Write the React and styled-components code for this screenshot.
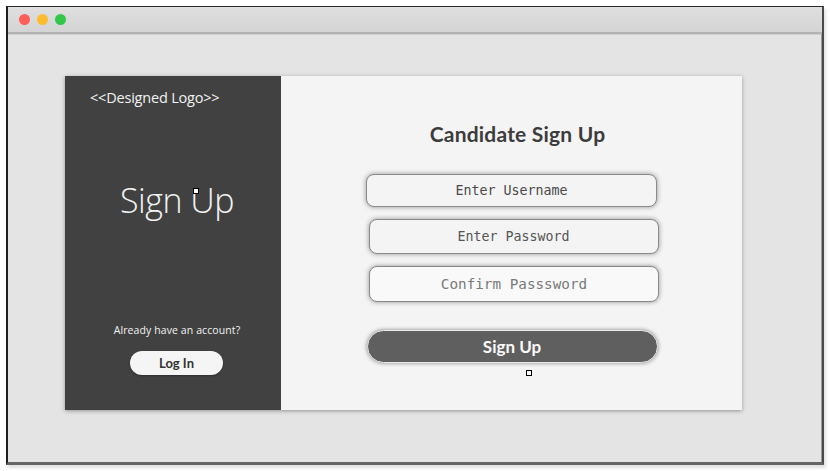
import React from "react";
import styled, { createGlobalStyle } from "styled-components";

const Global = createGlobalStyle`
  html, body { margin: 0; padding: 0; background: #ffffff; }
  body { width: 830px; height: 471px; overflow: hidden; font-family: "Open Sans", sans-serif; }
`;

const Page = styled.div`
  padding: 6px 6px 0 6px;
`;

const Window = styled.div`
  width: 818px;
  height: 459px;
  box-sizing: border-box;
  border-top: 1px solid #2a2a2a;
  border-left: 2px solid #1e1e1e;
  border-right: 2px solid #4a4a4a;
  border-bottom: 3px solid #666;
  box-shadow: 2px 3px 3px rgba(0,0,0,0.12);
  display: flex;
  flex-direction: column;
  background: #e4e4e4;
`;

const TitleBar = styled.div`
  height: 25px;
  background: linear-gradient(#e0dfe0, #d5d4d5);
  border-bottom: 2px solid #b2b2b2;
  box-shadow: 0 1px 0 #d0d0d0;
  display: flex;
  align-items: center;
  gap: 7px;
  padding-left: 11px;
  flex-shrink: 0;
`;

const Light = styled.span`
  width: 11px;
  height: 11px;
  border-radius: 50%;
  background: ${p => p.$c};
`;

const Body = styled.div`
  flex: 1;
  padding: 42px 0 0 57px;
  border-right: 1px solid #999;
`;

const Card = styled.div`
  width: 677px;
  height: 334px;
  display: flex;
  box-shadow: 0 1px 4px rgba(0,0,0,0.35);
`;

const LeftPanel = styled.div`
  position: relative;
  width: 216px;
  background: #414141;
  display: flex;
  flex-direction: column;
  align-items: center;
  color: #f2f2f2;
`;

const Logo = styled.div`
  align-self: flex-start;
  margin: 12px 0 0 25px;
  font-family: "Open Sans", sans-serif;
  font-size: 14.5px;
  letter-spacing: -0.2px;
  line-height: 20px;
`;

const BigTitle = styled.div`
  margin: 70px 0 0 8px;
  font-family: "Open Sans", sans-serif;
  font-weight: 300;
  font-size: 34px;
  line-height: 44px;
  letter-spacing: -0.5px;
`;

const Already = styled.div`
  margin: 101px 0 0 8px;
  font-family: "Open Sans", sans-serif;
  font-size: 10.5px;
  line-height: 14px;
  letter-spacing: 0.1px;
`;

const LoginButton = styled.button`
  margin: 14px 0 0 7px;
  width: 93px;
  height: 24px;
  border: none;
  border-radius: 12px;
  background: #f5f5f5;
  box-shadow: 0 1px 2px rgba(0,0,0,0.3);
  font-family: "Lato", sans-serif;
  font-weight: 700;
  font-size: 13px;
  color: #333;
  padding: 0;
`;

const Handle = styled.span`
  position: absolute;
  left: ${p => p.$x}px;
  top: ${p => p.$y}px;
  width: 4px;
  height: 4px;
  background: #fff;
  border: 1px solid #000;
`;

const RightPanel = styled.div`
  position: relative;
  flex: 1;
  background: #f4f4f4;
  display: flex;
  flex-direction: column;
  align-items: center;
`;

const Heading = styled.h1`
  margin: 44px 0 0 12px;
  font-family: "Lato", sans-serif;
  font-weight: 700;
  font-size: 21px;
  line-height: 28px;
  color: #3c3c3c;
  letter-spacing: 0.2px;
`;

const Field = styled.div`
  margin-top: ${p => p.$mt}px;
  margin-left: ${p => p.$ml}px;
  width: ${p => p.$w}px;
  height: ${p => p.$h}px;
  box-sizing: border-box;
  border: 1px solid #8a8a8a;
  border-radius: 8px;
  background: ${p => p.$bg || "#f4f4f4"};
  box-shadow: 0 0 5px rgba(0,0,0,0.4);
  display: flex;
  align-items: center;
  justify-content: center;
  font-family: "DejaVu Sans Mono", monospace;
  font-size: ${p => p.$fs}px;
  color: ${p => p.$color};
`;

const SubmitButton = styled.button`
  margin: 28px 0 0 1px;
  width: 291px;
  height: 33px;
  border: 1px solid #e8e8e8;
  border-radius: 17px;
  background: #5f5f5f;
  box-shadow: 0 0 4px rgba(0,0,0,0.45);
  color: #fafafa;
  font-family: "Lato", sans-serif;
  font-weight: 700;
  font-size: 17px;
  padding: 0;
`;

export default function App() {
  return (
    <>
      <Global />
      <Page>
        <Window>
          <TitleBar>
            <Light $c="#fc5f57" />
            <Light $c="#fdbc2e" />
            <Light $c="#33c748" />
          </TitleBar>
          <Body>
            <Card>
              <LeftPanel>
                <Logo>&lt;&lt;Designed Logo&gt;&gt;</Logo>
                <BigTitle>Sign Up</BigTitle>
                <Already>Already have an account?</Already>
                <LoginButton>Log In</LoginButton>
                <Handle $x={128} $y={112} />
              </LeftPanel>
              <RightPanel>
                <Heading>Candidate Sign Up</Heading>
                <Field $mt={26} $ml={0} $w={291} $h={33} $fs={13.3} $color="#4a4a4a">Enter Username</Field>
                <Field $mt={12} $ml={4} $w={290} $h={35} $fs={13.3} $color="#555">Enter Password</Field>
                <Field $mt={12} $ml={5} $w={290} $h={36} $fs={14.3} $color="#7a7a7a" $bg="#f9f9f9">Confirm Passsword</Field>
                <SubmitButton>Sign Up</SubmitButton>
                <Handle $x={245} $y={294} />
              </RightPanel>
            </Card>
          </Body>
        </Window>
      </Page>
    </>
  );
}
